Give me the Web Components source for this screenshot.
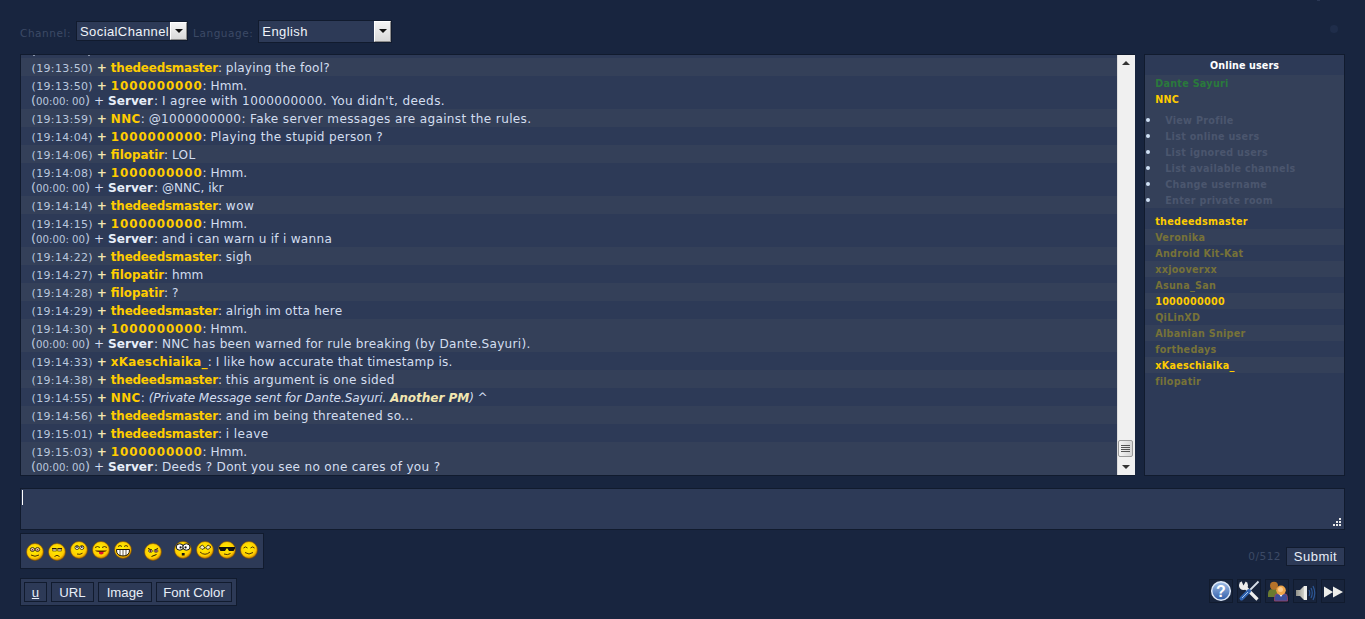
<!DOCTYPE html>
<html>
<head>
<meta charset="utf-8">
<title>Chat</title>
<style>
html, body { margin: 0; padding: 0; height: 100%; background: #18253f; overflow: hidden; }
body { font-family: "DejaVu Sans", sans-serif; }
</style>
</head>
<body>
<chat-app></chat-app>

<script>
const USERS = [
  ["thedeedsmaster", 1], ["Veronika", 0], ["Android Kit-Kat", 0], ["xxjooverxx", 0],
  ["Asuna_San", 0], ["1000000000", 1], ["QiLinXD", 0], ["Albanian Sniper", 0],
  ["forthedays", 0], ["xKaeschiaika_", 1], ["filopatir", 0]
];

// time, user, text, text spacing, server line, server line spacing
const MESSAGES = [
  ["19:13:50", "thedeedsmaster", "playing the fool?", 0.2],
  ["19:13:50", "1000000000", "Hmm.", 0, "I agree with 1000000000. You didn't, deeds.", 0.37],
  ["19:13:59", "NNC", "@1000000000: Fake server messages are against the rules.", 0.34],
  ["19:14:04", "1000000000", "Playing the stupid person ?", 0.3],
  ["19:14:06", "filopatir", "LOL", 0.3],
  ["19:14:08", "1000000000", "Hmm.", 0, "@NNC, ikr", 0],
  ["19:14:14", "thedeedsmaster", "wow", 0.5],
  ["19:14:15", "1000000000", "Hmm.", 0, "and i can warn u if i wanna", 0.26],
  ["19:14:22", "thedeedsmaster", "sigh", 0.25],
  ["19:14:27", "filopatir", "hmm", 0],
  ["19:14:28", "filopatir", "?", 0],
  ["19:14:29", "thedeedsmaster", "alrigh im otta here", 0.2],
  ["19:14:30", "1000000000", "Hmm.", 0, "NNC has been warned for rule breaking (by Dante.Sayuri).", 0.27],
  ["19:14:33", "xKaeschiaika_", "I like how accurate that timestamp is.", 0.22],
  ["19:14:38", "thedeedsmaster", "this argument is one sided", 0.3],
  ["19:14:55", "NNC", "<i>(Private Message sent for Dante.Sayuri. <b>Another PM</b>)</i> ^", -0.08],
  ["19:14:56", "thedeedsmaster", "and im being threatened so...", 0.3],
  ["19:15:01", "thedeedsmaster", "i leave", 0.4],
  ["19:15:03", "1000000000", "Hmm.", 0, "Deeds ? Dont you see no one cares of you ?", 0.3]
];

const NAME_SPACING = { thedeedsmaster: -0.18, "1000000000": 0.9, NNC: 0.4, filopatir: 0, xKaeschiaika_: 0.25 };

class ChatSelect extends HTMLElement {
  constructor() {
    super();
    this.attachShadow({ mode: "open" });
    this.shadowRoot.innerHTML = `
    <style>
    :host {
        display: flex;
        box-sizing: border-box;
        height: var(--h, 20px);
        width: var(--w, 112px);
        background: #2d3a57;
        border: 1px solid #111b2e;
        color: #f0f4fa;
        font: 13px "Liberation Sans", sans-serif;
        letter-spacing: 0.4px;
        align-items: center;
        padding-left: 3px;
    }
    .label { flex: 1; }
    .arrow {
        width: 17px;
        height: var(--ah, 18px);
        box-sizing: border-box;
        background: linear-gradient(#f4f4f4, #d9d9d9);
        border: 1px solid #fff;
        border-right-color: #8d8d8d;
        border-bottom-color: #8d8d8d;
        display: flex;
        align-items: center;
        justify-content: center;
    }
    .arrow::after {
        content: "";
        border: 4px solid transparent;
        border-top: 4px solid #111;
        border-bottom: 0;
    }
    </style>
    <span class="label"><slot></slot></span><span class="arrow"></span>`;
  }
}

class ChatToolbar extends HTMLElement {
  constructor() {
    super();
    this.attachShadow({ mode: "open" });
    this.shadowRoot.innerHTML = `
    <style>
    :host {
        display: flex;
        align-items: center;
        height: 22px;
        font-size: 10.5px;
        color: #3c4a66;
        letter-spacing: 0.55px;
    }
    span { padding-top: 3px; }
    .l1 { margin-right: 5px; }
    .l2 { margin: 0 5px 0 5px; }
    .channel { --w: 112px; --h: 20px; --ah: 18px; }
    .language { --w: 134px; --h: 23px; --ah: 21px; }
    </style>
    <span class="l1">Channel:</span>
    <chat-select class="channel">SocialChannel</chat-select>
    <span class="l2">Language:</span>
    <chat-select class="language">English</chat-select>`;
  }
}

class ChatRow extends HTMLElement {
  constructor() {
    super();
    this.attachShadow({ mode: "open" });
  }

  render(msg) {
    const [time, user, text, ls, server, sls] = msg;
    this.shadowRoot.innerHTML = `
    <style>
    :host {
        display: block;
        padding-left: 10.5px;
        color: #d3def0;
        font-size: 12.1px;
        white-space: nowrap;
    }
    :host([alt]) { background: #344059; }
    .line { height: 18px; line-height: 21px; }
    .line.s { height: 15px; line-height: 13px; margin-left: -.5px; }
    .time { font-size: 11px; letter-spacing: 0.35px; color: #b9c7dd; }
    .plus { color: #f2e6b0; font-weight: bold; }
    .name { color: #ffcc00; font-weight: bold; font-size: 11.9px; }
    .s .plus { color: #d3def0; font-weight: normal; }
    .s .name { color: #e6edf8; font-size: 12.1px; margin-right: 1px; }
    .z { font-size: 10.2px; color: #b9c7dd; }
    .p { font-size: 13px; color: #b9c7dd; }
    b { color: #f2e6b0; }
    </style>
    <div class="line"><span class="time">(${time})</span> <span class="plus">+</span> <span class="name" style="letter-spacing:${NAME_SPACING[user] || 0}px">${user}</span>: <span style="letter-spacing:${ls}px">${text}</span></div>
    ${server ? `<div class="line s"><span class="p">(</span><span class="z">00:00: 00</span><span class="p">)</span> <span class="plus">+</span> <span class="name">Server</span>: <span style="letter-spacing:${sls}px">${server}</span></div>` : ""}`;
  }
}

class ChatLog extends HTMLElement {
  constructor() {
    super();
    this.attachShadow({ mode: "open" });
    this.shadowRoot.innerHTML = `
    <style>
    :host {
        display: flex;
        box-sizing: border-box;
        width: 1116px;
        height: 422px;
        background: #2d3a57;
        border: 1px solid #111b2e;
        border-right: 0;
    }
    .rows { flex: 1; padding-top: 3px; overflow: hidden; min-width: 0; position: relative; }
    .mark { position: absolute; top: 0; width: 2px; height: 1px; background: #8a97ad; }
    .bar {
        width: 18px;
        background: #f0f0f0;
        border-left: 1px solid #dcdcdc;
        box-sizing: border-box;
        position: relative;
    }
    .up, .down {
        position: absolute;
        left: 4px;
        border: 4px solid transparent;
    }
    .up { top: 6px; border-bottom: 4px solid #333; border-top: 0; }
    .down { bottom: 6px; border-top: 4px solid #333; border-bottom: 0; }
    .thumb {
        position: absolute;
        left: 0;
        bottom: 18px;
        width: 15px;
        height: 17px;
        box-sizing: border-box;
        border: 1px solid #9a9a9a;
        border-radius: 2px;
        background: linear-gradient(90deg, #f4f4f4, #d6d6d6);
        padding: 4px 2px;
        display: flex;
        flex-direction: column;
        justify-content: space-between;
    }
    .thumb i { display: block; height: 1px; background: #555; }
    </style>
    <div class="rows">
      <span class="mark" style="left:12px"></span>
      <span class="mark" style="left:67px"></span>
    </div>
    <div class="bar">
      <span class="up"></span>
      <span class="thumb"><i></i><i></i><i></i><i></i></span>
      <span class="down"></span>
    </div>`;
    const rows = this.shadowRoot.querySelector(".rows");
    MESSAGES.forEach((m, i) => {
      const row = document.createElement("chat-row");
      if (i % 2 === 0) row.setAttribute("alt", "");
      row.render(m);
      rows.appendChild(row);
    });
  }
}

class UserList extends HTMLElement {
  constructor() {
    super();
    this.attachShadow({ mode: "open" });
    const menu = ["View Profile", "List online users", "List ignored users", "List available channels", "Change username", "Enter private room"];
    this.shadowRoot.innerHTML = `
    <style>
    :host {
        display: block;
        box-sizing: border-box;
        width: 201px;
        height: 422px;
        background: #2d3a57;
        border: 1px solid #111b2e;
        font-size: 9.6px;
        font-weight: bold;
        letter-spacing: 0.3px;
    }
    .title { height: 20px; line-height: 21px; text-align: center; color: #fff; letter-spacing: 0.1px; }
    .me { background: #344059; padding: 0 0 0 10px; height: 133px; }
    .me div { height: 16px; line-height: 18px; }
    .dante { color: #2a7a3c; }
    .nnc { color: #ffcc00; }
    ul { margin: 5px 0 0 -10px; padding: 0; list-style: none; }
    li { height: 16px; line-height: 18px; color: #4b566e; padding-left: 20px; position: relative; }
    li::before { content: ""; position: absolute; left: 1px; top: 6px; width: 4px; height: 4px; border-radius: 50%; background: #cfe0f5; }
    .users { padding-top: 5px; }
    .users div { height: 16px; line-height: 17px; padding-left: 10px; color: #777238; }
    .users div:nth-child(even) { background: #344059; }
    .users div.on { color: #ffcc00; }
    </style>
    <div class="title">Online users</div>
    <div class="me">
      <div class="dante">Dante Sayuri</div>
      <div class="nnc">NNC</div>
      <ul>${menu.map(m => `<li>${m}</li>`).join("")}</ul>
    </div>
    <div class="users">${USERS.map(u => `<div class="${u[1] ? "on" : ""}">${u[0]}</div>`).join("")}</div>`;
  }
}

class ChatInput extends HTMLElement {
  constructor() {
    super();
    this.attachShadow({ mode: "open" });
    this.shadowRoot.innerHTML = `
    <style>
    :host {
        display: block;
        box-sizing: border-box;
        height: 42px;
        background: #2d3a57;
        border: 1px solid #111b2e;
        position: relative;
    }
    .caret { position: absolute; left: 1px; top: 1px; width: 1px; height: 15px; background: #fff; }
    svg { position: absolute; right: 2px; bottom: 2px; }
    </style>
    <span class="caret"></span>
    <svg width="9" height="9" viewBox="0 0 9 9" fill="#e8e8e8">
      <rect x="6" y="0" width="2" height="2"/><rect x="3" y="3" width="2" height="2"/><rect x="6" y="3" width="2" height="2"/>
      <rect x="0" y="6" width="2" height="2"/><rect x="3" y="6" width="2" height="2"/><rect x="6" y="6" width="2" height="2"/>
    </svg>`;
  }
}

const INK = 'stroke="#3a2400" fill="none" stroke-width=".9"';
const HAIR = `<path d="M7 5l2.500 2.500M10 3.500V7M13.500 5L11 7.500" stroke="#7a5a20" fill="none"/>`;

// plain faces sit at cy 11, the ones with hair 2px lower
const FACE = (inner, hair) => {
  const dy = hair ? 2 : 0;
  return `<svg width="20" height="24" viewBox="0 0 20 24">
  <defs><radialGradient id="g" cx="45%" cy="40%" r="58%"><stop offset="0" stop-color="#fff200"/><stop offset=".78" stop-color="#ffcc00"/><stop offset="1" stop-color="#c98400"/></radialGradient></defs>
  ${hair ? HAIR : ""}<g transform="translate(0 ${dy})"><circle cx="10" cy="11" r="8.500" fill="url(#g)" stroke="#7a4c00" stroke-width=".6"/>${inner}</g></svg>`;
};

const SMILEYS = [
  FACE(`<ellipse cx="7.500" cy="8.500" rx="2.200" ry="1.900" fill="#f7e6c0" stroke="#2a1a00" stroke-width=".9"/><ellipse cx="12.500" cy="8.500" rx="2.200" ry="1.900" fill="#f7e6c0" stroke="#2a1a00" stroke-width=".9"/><circle cx="7.500" cy="8.700" r=".8" fill="#701030"/><circle cx="12.500" cy="8.700" r=".8" fill="#701030"/><path d="M6 14q4 2.500 8 0" ${INK}/>`, true),
  FACE(`<path d="M5 7.500h4.500M10.500 7.500H15" stroke="#2a1a00"/><rect x="5.800" y="8" width="3.400" height="2" fill="#f7e6c0" stroke="#2a1a00" stroke-width=".6"/><rect x="10.800" y="8" width="3.400" height="2" fill="#f7e6c0" stroke="#2a1a00" stroke-width=".6"/><path d="M7.500 15.500q2.500-2.500 5 0" ${INK}/>`, true),
  FACE(`<circle cx="8" cy="8.500" r="2" fill="#fff" stroke="#2a1a00" stroke-width=".8"/><circle cx="12.800" cy="8.500" r="2" fill="#fff" stroke="#2a1a00" stroke-width=".8"/><circle cx="8" cy="8" r=".9" fill="#222"/><circle cx="12.800" cy="8" r=".9" fill="#222"/><path d="M8 15q3 1 5.500-.800" ${INK}/>`),
  FACE(`<path d="M4 8.500q2.500-2 5 0M11 8.500q2.500-2 5 0" ${INK}/><path d="M4 11.500h12q-1.500 1.500-6 1.500t-6-1.500z" fill="#5a2a00"/><path d="M8 13h4.500v1.500q-2.200 2-4.500 0z" fill="#e01030"/>`),
  FACE(`<path d="M5 7.500q2-2 4 0M11 7.500q2-2 4 0" ${INK}/><path d="M3.500 10.500h13q.3 6.500-6.500 6.500t-6.500-6.500z" fill="#fff" stroke="#2a1a00"/><path d="M7 10.500v6M10 10.500V17M13 10.500v6" stroke="#2a1a00" stroke-width=".7"/>`),
  FACE(`<path d="M5 7.500l4 1.500M11.500 9l3.500-1.500" stroke="#2a1a00"/><ellipse cx="7.500" cy="10" rx="2" ry="1.300" fill="#fff" stroke="#2a1a00" stroke-width=".7"/><ellipse cx="13" cy="10" rx="2" ry="1.300" fill="#fff" stroke="#2a1a00" stroke-width=".7"/><circle cx="7.500" cy="10" r=".9" fill="#601020"/><circle cx="13" cy="10" r=".9" fill="#601020"/><path d="M8.500 15.500l5-2" stroke="#2a1a00"/>`, true),
  FACE(`<ellipse cx="6.800" cy="8" rx="3.600" ry="3.200" fill="#fff" stroke="#111"/><ellipse cx="13.400" cy="8" rx="3.600" ry="3.200" fill="#fff" stroke="#111"/><circle cx="7.600" cy="8.400" r="1.100" fill="#111"/><circle cx="12.600" cy="8.400" r="1.100" fill="#111"/><rect x="8.800" y="14" width="2.800" height="2.500" fill="#111"/>`),
  FACE(`<path d="M4.500 8l3-2 2.500 3-3 1.500zM10.500 9l2.500-3 3 2-3 2.500z" fill="#f7efc0" stroke="#2a1a00" stroke-width=".8"/><path d="M5 13q5 4.500 10 0" ${INK}/>`),
  FACE(`<path d="M2 8h16v1.500l-1.500 2.500h-4.500L10.500 9.500h-1L8 12H3.500L2 9.500z" fill="#111"/><path d="M7 15q3.500 1.500 6.500-.500" ${INK}/>`),
  FACE(`<path d="M4.500 9q2-2.200 4 0M11.500 9q2-2.200 4 0" ${INK}/><path d="M6 13.500q4 3 8 0" ${INK}/>`)
];

class SmileyBar extends HTMLElement {
  constructor() {
    super();
    this.attachShadow({ mode: "open" });
    this.shadowRoot.innerHTML = `
    <style>
    :host {
        display: flex;
        box-sizing: border-box;
        width: 244px;
        height: 36px;
        background: #2d3a57;
        border: 1px solid #111b2e;
        align-items: center;
        padding: 0 4px;
        gap: 2px;
    }
    svg { display: block; }
    .gap { margin-left: 8px; }
    </style>
    ${SMILEYS.map((s, i) => `<span class="${i === 5 || i === 6 ? "gap" : ""}">${s}</span>`).join("")}`;
  }
}

class FormatButton extends HTMLElement {
  constructor() {
    super();
    this.attachShadow({ mode: "open" });
    this.shadowRoot.innerHTML = `
    <style>
    :host {
        display: flex;
        align-items: center;
        justify-content: center;
        box-sizing: border-box;
        height: 20px;
        background: #2d3a57;
        border: 1px solid #111b2e;
        color: #e8eef8;
        font: 13.2px "Liberation Sans", sans-serif;
    }
    </style>
    <slot></slot>`;
  }
}

class FormatBar extends HTMLElement {
  constructor() {
    super();
    this.attachShadow({ mode: "open" });
    this.shadowRoot.innerHTML = `
    <style>
    :host {
        display: flex;
        box-sizing: border-box;
        width: 217px;
        height: 28px;
        background: #2d3a57;
        border: 1px solid #111b2e;
        align-items: center;
        padding: 0 3px;
        gap: 4px;
    }
    </style>
    <slot></slot>`;
  }
}

class IconButton extends HTMLElement {
  constructor() {
    super();
    this.attachShadow({ mode: "open" });
    this.shadowRoot.innerHTML = `
    <style>
    :host {
        display: flex;
        align-items: center;
        justify-content: center;
        box-sizing: border-box;
        width: 24px;
        height: 24px;
        background: #18243c;
        border: 1px solid #111b2e;
    }
    svg { display: block; }
    </style>
    <slot></slot>`;
  }
}

class ChatApp extends HTMLElement {
  constructor() {
    super();
    this.attachShadow({ mode: "open" });
    this.shadowRoot.innerHTML = `
    <style>
    :host {
        display: flex;
        flex-direction: column;
        box-sizing: border-box;
        width: 1365px;
        height: 619px;
        padding: 20px 20px 0 20px;
    }
    .main { display: flex; gap: 9px; margin-top: 12px; }
    chat-input { margin-top: 12px; }
    .mid { display: flex; justify-content: space-between; margin-top: 3px; height: 36px; }
    .count { display: flex; align-items: center; gap: 5px; margin-top: 13px; font-size: 10.5px; color: #3c4a66; letter-spacing: .5px; height: 20px; }
    .submit { height: 19px; width: 59px; font-size: 13px; }
    .bottom { display: flex; justify-content: space-between; align-items: flex-start; margin-top: 9px; }
    .icons { display: flex; gap: 4px; margin-top: 1px; }
    u { text-decoration: underline; }
    .dot { position: absolute; left: 1330px; top: 25px; width: 8px; height: 8px; border-radius: 50%; background: #1f2d4a; }
    .speck { position: absolute; left: 1317px; top: 0; width: 3px; height: 1px; background: #2a3754; }
    </style>
    <span class="dot"></span>
    <span class="speck"></span>
    <chat-toolbar></chat-toolbar>
    <div class="main">
      <chat-log></chat-log>
      <user-list></user-list>
    </div>
    <chat-input></chat-input>
    <div class="mid">
      <smiley-bar></smiley-bar>
      <div class="count">0/512 <format-button class="submit">Submit</format-button></div>
    </div>
    <div class="bottom">
      <format-bar>
        <format-button style="width:23px"><u>u</u></format-button>
        <format-button style="width:43px">URL</format-button>
        <format-button style="width:54px">Image</format-button>
        <format-button style="width:76px">Font Color</format-button>
      </format-bar>
      <div class="icons">
        <icon-button><svg width="22" height="22" viewBox="0 0 22 22"><defs><linearGradient id="q" x1="0" y1="0" x2="0" y2="1"><stop offset="0" stop-color="#a4c2ea"/><stop offset="1" stop-color="#2f5ca8"/></linearGradient></defs><circle cx="11" cy="11" r="9.300" fill="url(#q)" stroke="#dfe9f8" stroke-width="1.500"/><text x="11" y="16.500" text-anchor="middle" font-family="Liberation Sans" font-weight="bold" font-size="16" fill="#fff">?</text></svg></icon-button>
        <icon-button><svg width="22" height="22" viewBox="0 0 22 22"><circle cx="5.500" cy="5.500" r="4.500" fill="#eee"/><path d="M3 0h5.500L5.500 5.500z" fill="#18243c"/><path d="M6 6l13.500 13.500" stroke="#eee" stroke-width="3.200"/><path d="M20.500 1.500L11 11" stroke="#d8e0ea" stroke-width="1.800"/><path d="M11 11l-7.500 7.500" stroke="#2f62ae" stroke-width="4" stroke-linecap="round"/><path d="M10 12l-6 6" stroke="#a9c4ea" stroke-width="1"/></svg></icon-button>
        <icon-button><svg width="22" height="22" viewBox="0 0 22 22"><path d="M2 17v-3q0-5 5-5h2q3 0 3 4v4z" fill="#6a7a30"/><circle cx="8" cy="5.700" r="4" fill="#b5722a"/><path d="M8.500 21v-3.500q0-4 4-4h5q4 0 4 4V21z" fill="#3c4f9a" stroke="#b04060" stroke-width=".7"/><path d="M13 14h4l-2 3z" fill="#eef"/><circle cx="15" cy="10.300" r="4.800" fill="#f0a548"/><circle cx="14.500" cy="9.500" r="2.500" fill="#f8c88a"/></svg></icon-button>
        <icon-button><svg width="22" height="22" viewBox="0 0 22 22"><defs><linearGradient id="s" x1="0" y1="0" x2="1" y2="0"><stop offset="0" stop-color="#8f8f88"/><stop offset="1" stop-color="#d2d2ca"/></linearGradient></defs><path d="M2 10h4l4-4v14l-4-4H2z" fill="url(#s)"/><rect x="10" y="6" width="3" height="14" fill="#eeeeea"/><path d="M15 10q1.500 3 0 6M17 8q2.500 5 0 10M19 6q3.500 7 0 14" stroke="#2c5796" stroke-width="1.200" fill="none"/></svg></icon-button>
        <icon-button><svg width="22" height="22" viewBox="0 0 22 22"><path d="M2 6.500l9 5.500-9 5.500zM11 6.500l10 5.500-10 5.500z" fill="#eeeeea"/></svg></icon-button>
      </div>
    </div>`;
  }
}

customElements.define("chat-select", ChatSelect);
customElements.define("chat-toolbar", ChatToolbar);
customElements.define("chat-row", ChatRow);
customElements.define("chat-log", ChatLog);
customElements.define("user-list", UserList);
customElements.define("chat-input", ChatInput);
customElements.define("smiley-bar", SmileyBar);
customElements.define("format-button", FormatButton);
customElements.define("format-bar", FormatBar);
customElements.define("icon-button", IconButton);
customElements.define("chat-app", ChatApp);
</script>
</body>
</html>
